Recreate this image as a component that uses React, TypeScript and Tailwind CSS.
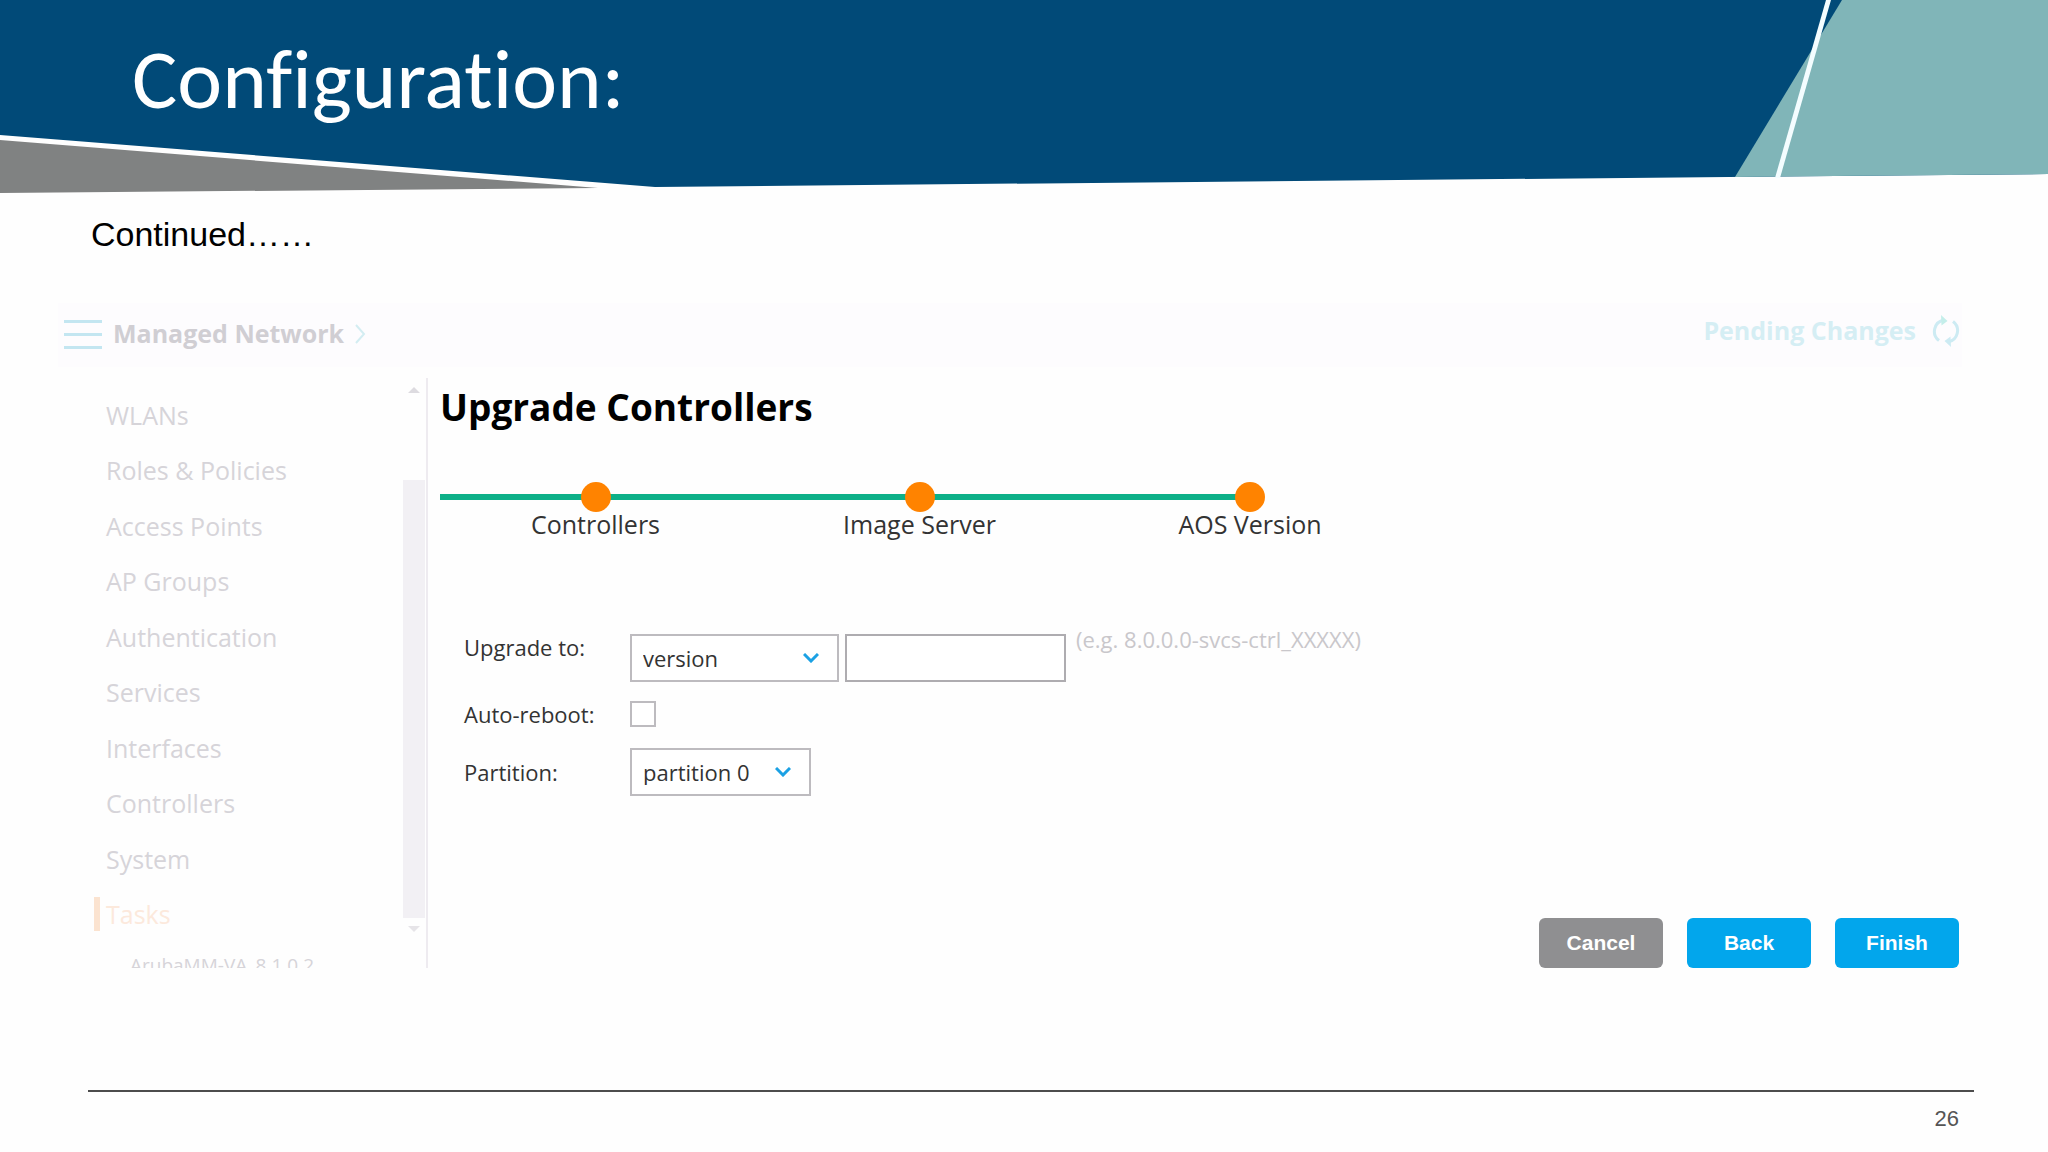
import { useState } from "react";

const navItems = [
  "WLANs",
  "Roles & Policies",
  "Access Points",
  "AP Groups",
  "Authentication",
  "Services",
  "Interfaces",
  "Controllers",
  "System",
  "Tasks",
];

const steps = ["Controllers", "Image Server", "AOS Version"];

const SlideHeader: React.FC = () => {
  return (
    <header className="relative h-[194px]">
      <svg
        className="absolute inset-0 h-full w-full"
        viewBox="0 0 2048 194"
        preserveAspectRatio="none"
        aria-hidden="true"
      >
        <polygon points="0,0 2048,0 2048,174 655,187 0,135" fill="#014a78" />
        <polygon points="1842,0 2048,0 2048,174 1735,177" fill="#80b5b8" />
        <polygon points="0,140 598,188 0,193" fill="#808282" />
        <polygon points="1826,0 1831,0 1780,178 1775,178" fill="#f4fdff" />
      </svg>
      <h1 className="relative pt-8 pl-[132px] font-['Carlito','Calibri','Lato',sans-serif] text-[85px] leading-[94px] text-white [font-variant-ligatures:none]">
        Configuration:
      </h1>
    </header>
  );
};

const RefreshIcon: React.FC = () => {
  return (
    <svg width="28" height="32" viewBox="0 0 28 32" fill="none" stroke="#cdebf3" strokeWidth="3" aria-hidden="true">
      <path d="M7 25.500A11.500 11.500 0 0 1 12 5" />
      <path d="M21 6.500A11.500 11.500 0 0 1 16 27" />
      <path d="M9 0L15.500 6L9.500 10.500Z" fill="#c4eeea" stroke="none" />
      <path d="M19 32L12.500 26L18.500 21.500Z" fill="#cdebf3" stroke="none" />
    </svg>
  );
};

const TopBar: React.FC = () => {
  return (
    <div className="flex h-16 items-center justify-between bg-[#fdfcfe] pr-0.5 pb-0.5 pl-1.5 text-[25px] font-bold">
      <div className="flex items-center">
        <button type="button" aria-label="Menu" className="flex w-[38px] flex-col gap-[10px]">
          <span className="h-[3px] w-full bg-[#c3e6f1]"></span>
          <span className="h-[3px] w-full bg-[#c3e6f1]"></span>
          <span className="h-[3px] w-full bg-[#c3e6f1]"></span>
        </button>
        <a href="#network" className="ml-[11px] flex items-center gap-2.5 text-[#d0ced3]">
          Managed Network
          <svg width="12" height="20" viewBox="0 0 12 20" fill="none" stroke="#d3edf2" strokeWidth="2" aria-hidden="true">
            <path d="M2 1L10 10L2 19" />
          </svg>
        </a>
      </div>
      <a href="#pending" className="flex items-center gap-4 pb-1.5 text-[#d5eef4]">
        Pending Changes
        <RefreshIcon />
      </a>
    </div>
  );
};

const Sidebar: React.FC = () => {
  return (
    <div className="flex h-[590px] w-[370px] shrink-0 overflow-hidden border-r-2 border-[#eeebf0]">
      <nav className="flex-1 pt-[9px] pl-9 text-[25px] text-[#d6d4d9]">
        <ul className="grid h-[555px] auto-rows-fr">
          {navItems.map((item) => (
            <li key={item} className="flex items-center">
              <a
                href="#nav"
                className={
                  item === "Tasks"
                    ? "border-l-[6px] border-[#fbe3d0] pl-1.5 leading-[34px] text-[#fce9dc]"
                    : "border-l-[6px] border-transparent pl-1.5 leading-[34px]"
                }
              >
                {item}
              </a>
            </li>
          ))}
        </ul>
        <a href="#version" className="block pt-[9px] pl-9 text-[19px] leading-7">
          ArubaMM-VA_8.1.0.2
        </a>
      </nav>
      <div className="flex w-6 flex-col items-center justify-between pt-[9px] pb-9" aria-hidden="true">
        <svg width="12" height="6" viewBox="0 0 12 6" fill="#dddbe0">
          <path d="M0 6L6 0L12 6Z" />
        </svg>
        <div className="mt-[87px] mb-2 w-[22px] flex-1 bg-[#f2f0f4]"></div>
        <svg width="12" height="6" viewBox="0 0 12 6" fill="#e6e4e8">
          <path d="M0 0L6 6L12 0Z" />
        </svg>
      </div>
    </div>
  );
};

const Steps: React.FC = () => {
  return (
    <ol className="relative mt-[52px] grid max-w-[972px] grid-cols-[311fr_337fr_324fr] text-[25px] leading-6 text-[#333]">
      <div className="absolute top-3 left-0 h-1.5 w-5/6 bg-[#0db088]" aria-hidden="true"></div>
      {steps.map((step) => (
        <li key={step} className="relative flex flex-col items-center">
          <span className="h-[30px] w-[30px] rounded-full bg-[#ff8300]"></span>
          {step}
        </li>
      ))}
    </ol>
  );
};

type SelectProps = { id: string; options: string[]; className: string };

const Select: React.FC<SelectProps> = ({ id, options, className }) => {
  return (
    <div className={"relative h-12 " + className}>
      <select id={id} className="h-full w-full appearance-none border-2 border-[#bdbbbf] bg-white pl-[11px]">
        {options.map((option) => (
          <option key={option}>{option}</option>
        ))}
      </select>
      <svg
        className="pointer-events-none absolute top-[19px] right-5"
        width="16"
        height="10"
        viewBox="0 0 16 10"
        fill="none"
        stroke="#1ba1e4"
        strokeWidth="3"
        aria-hidden="true"
      >
        <path d="M1 1L8 8L15 1" />
      </svg>
    </div>
  );
};

const UpgradeForm: React.FC = () => {
  const [version, setVersion] = useState("");
  const [reboot, setReboot] = useState(false);

  return (
    <form className="mt-[98px] ml-6 flex flex-col text-[22px] leading-[26px] text-[#333]">
      <div className="flex">
        <label htmlFor="upgrade-to" className="w-[166px]">
          Upgrade to:
        </label>
        <Select id="upgrade-to" options={["version"]} className="w-[209px]" />
        <input
          type="text"
          aria-label="Version"
          value={version}
          onChange={(e) => setVersion(e.target.value)}
          className="ml-1.5 h-12 w-[221px] border-2 border-[#aeacb0] bg-white px-3"
        />
        <span className="-mt-2 ml-2.5 text-[#c9c7cb]">(e.g. 8.0.0.0-svcs-ctrl_XXXXX)</span>
      </div>
      <div className="mt-[19px] flex items-center">
        <label htmlFor="auto-reboot" className="w-[166px]">
          Auto-reboot:
        </label>
        <input
          id="auto-reboot"
          type="checkbox"
          checked={reboot}
          onChange={(e) => setReboot(e.target.checked)}
          className="h-[26px] w-[26px] appearance-none border-2 border-[#bdbbbf] bg-white checked:bg-[#1ba1e4]"
        />
      </div>
      <div className="mt-[21px] flex items-center">
        <label htmlFor="partition" className="w-[166px]">
          Partition:
        </label>
        <Select id="partition" options={["partition 0", "partition 1"]} className="w-[181px]" />
      </div>
    </form>
  );
};

const Actions: React.FC = () => {
  return (
    <div className="mt-auto flex justify-end gap-6 pr-[3px] font-['Liberation_Sans',Arial,sans-serif] text-[21px] font-bold text-white">
      <button type="button" className="h-[50px] w-[124px] rounded-md bg-[#8f8f91]">
        Cancel
      </button>
      <button type="button" className="h-[50px] w-[124px] rounded-md bg-[#02a6ec]">
        Back
      </button>
      <button type="button" className="h-[50px] w-[124px] rounded-md bg-[#02a6ec]">
        Finish
      </button>
    </div>
  );
};

const App: React.FC = () => {
  return (
    <div className="flex min-h-screen flex-col bg-[#fefefe] font-['Liberation_Sans',Arial,sans-serif]">
      <SlideHeader />
      <p className="mt-5 pl-[91px] text-[34px] leading-10 text-black">Continued……</p>
      <main className="mt-[49px] mr-[86px] ml-[58px] font-['Open_Sans',sans-serif]">
        <TopBar />
        <div className="mt-[11px] flex">
          <Sidebar />
          <section className="flex flex-1 flex-col pl-3">
            <h2 className="mt-1.5 text-[37px] leading-[46px] font-bold text-black">Upgrade Controllers</h2>
            <Steps />
            <UpgradeForm />
            <Actions />
          </section>
        </div>
      </main>
      <footer className="mt-auto mr-[74px] ml-[88px] h-[62px] border-t-2 border-[#4c4c4c] pt-[11px] pr-[15px] text-right text-[22px] leading-8 text-[#555]">
        26
      </footer>
    </div>
  );
};

export default App;
